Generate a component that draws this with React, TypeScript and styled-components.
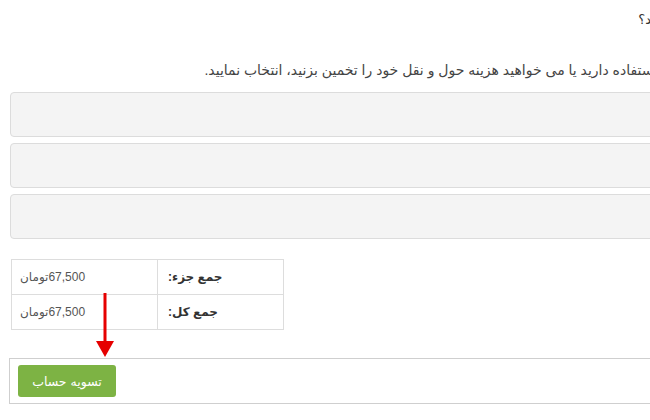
import styled, { createGlobalStyle } from 'styled-components';

const GlobalStyle = createGlobalStyle`
  html, body {
    margin: 0;
    padding: 0;
    background: #fff;
    overflow: hidden;
  }
  body {
    font-family: "Liberation Sans", "DejaVu Sans", sans-serif;
    color: #333;
  }
`;

const Page = styled.div`
  position: relative;
  direction: rtl;
  width: 853px;
  padding: 10px 0 0 10px;
  box-sizing: border-box;
`;

const Heading = styled.p`
  margin: 0;
  font-size: 13px;
  word-spacing: -2px;
  line-height: 20px;
  color: #333;
`;

const Intro = styled.p`
  margin: 30px 0 0;
  font-size: 14px;
  line-height: 20px;
  color: #444;
`;

const PanelGroup = styled.div`
  display: flex;
  flex-direction: column;
  gap: 6px;
  margin-top: 12px;
`;

const Panel = styled.div`
  height: 45px;
  box-sizing: border-box;
  background: #f4f4f4;
  border: 1px solid #dcdcdc;
  border-radius: 4px;
`;

const TotalsRow = styled.div`
  display: flex;
  justify-content: flex-end;
  margin-top: 20px;
`;

const Totals = styled.table`
  width: 273px;
  margin-left: 1px;
  border-collapse: collapse;
`;

const Cell = styled.td<{ $label?: boolean }>`
  height: 35px;
  box-sizing: border-box;
  border: 1px solid #ddd;
  padding: 0 ${(p) => (p.$label ? '10px' : '8px')};
  text-align: left;
  width: ${(p) => (p.$label ? '126px' : '146px')};
  font-weight: ${(p) => (p.$label ? 'bold' : 'normal')};
  font-size: 12px;
  color: ${(p) => (p.$label ? '#333' : '#555')};
`;

const Buttons = styled.div`
  display: flex;
  justify-content: flex-end;
  margin-top: 28px;
  margin-left: -1px;
  padding: 6px 8px;
  border: 1px solid #cfcfcf;
`;

const CheckoutButton = styled.button`
  width: 98px;
  height: 32px;
  border: none;
  border-radius: 3px;
  background: #7db344;
  color: #fff;
  font-family: "DejaVu Sans", sans-serif;
  font-size: 12.5px;
  direction: rtl;
  cursor: pointer;
`;

const Arrow = styled.svg`
  position: absolute;
  left: 96px;
  top: 293px;
`;

export default function App() {
  return (
    <>
      <GlobalStyle />
      <Page>
        <Heading>مرحله بعد چه کاری می خواهید انجام دهید؟</Heading>
        <Intro>
          اگر کد تخفیف یا امتیاز جایزه برای استفاده دارید یا می خواهید هزینه حول و نقل خود را تخمین بزنید، انتخاب نمایید.
        </Intro>
        <PanelGroup>
          <Panel />
          <Panel />
          <Panel />
        </PanelGroup>
        <TotalsRow>
          <Totals>
            <tbody>
              <tr>
                <Cell $label>جمع جزء:</Cell>
                <Cell>67,500تومان</Cell>
              </tr>
              <tr>
                <Cell $label>جمع کل:</Cell>
                <Cell>67,500تومان</Cell>
              </tr>
            </tbody>
          </Totals>
        </TotalsRow>
        <Buttons>
          <CheckoutButton>تسویه حساب</CheckoutButton>
        </Buttons>
        <Arrow width="18" height="65" viewBox="0 0 18 65">
          <rect x="7.5" y="0" width="3" height="49" fill="#e60000" />
          <polygon points="0,48 18,48 9,64" fill="#e60000" />
        </Arrow>
      </Page>
    </>
  );
}
